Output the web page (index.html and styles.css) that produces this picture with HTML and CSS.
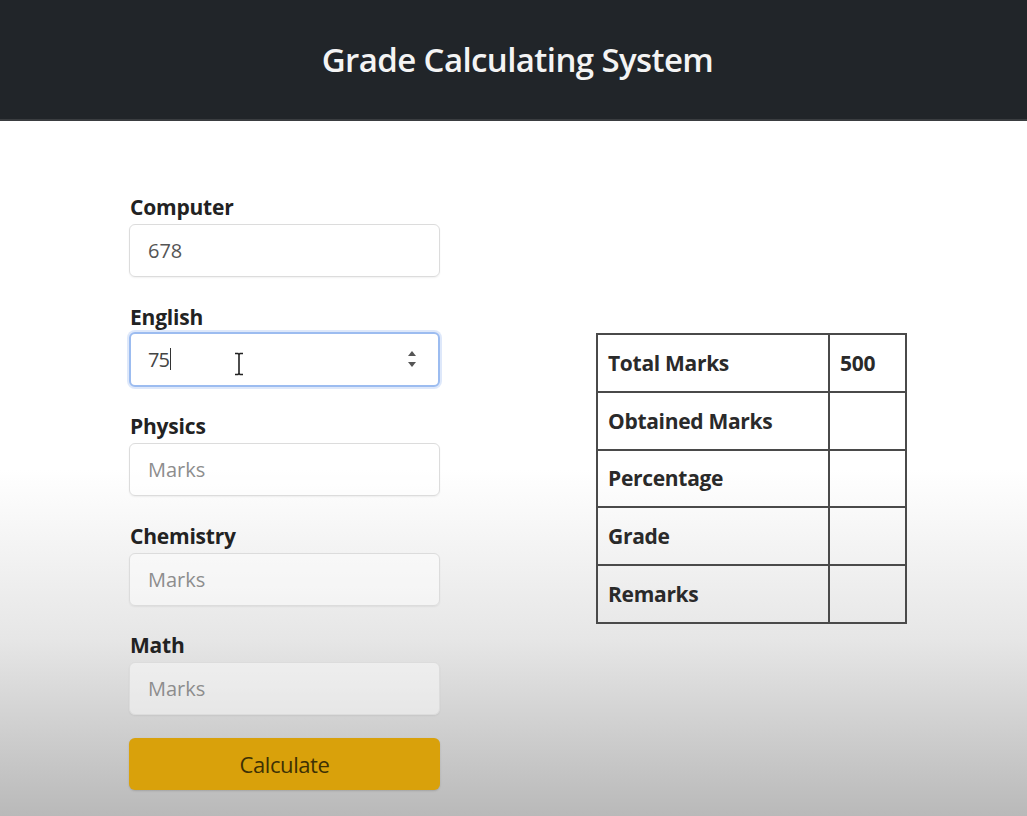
FILE: index.html
```html
<!DOCTYPE html>
<html lang="en">
<head>
<meta charset="utf-8">
<title>Grade Calculating System</title>
<link rel="stylesheet" href="styles.css">
</head>
<body>
<header class="topbar">
  <h1 class="title">Grade Calculating System</h1>
</header>
<main class="page">
  <form class="form-col">
    <div class="group">
      <label class="label">Computer</label>
      <input class="field" type="text" value="678">
    </div>
    <div class="group">
      <label class="label">English</label>
      <div class="field field-focus">
        <span class="typed">75</span><span class="caret"></span>
        <svg class="ibeam" width="12" height="24" viewBox="0 0 12 24"><path d="M2 1.5h3l1 1 1-1h3M6 2.5v19M2 22.5h3l1-1 1 1h3" fill="none" stroke="#222" stroke-width="1.6"/></svg>
        <svg class="spin" width="12" height="22" viewBox="0 0 12 22"><path d="M6 3 10 8H2z" fill="#555"/><path d="M6 19 10 14H2z" fill="#555"/></svg>
      </div>
    </div>
    <div class="group">
      <label class="label">Physics</label>
      <input class="field" type="text" placeholder="Marks">
    </div>
    <div class="group">
      <label class="label">Chemistry</label>
      <input class="field" type="text" placeholder="Marks">
    </div>
    <div class="group">
      <label class="label">Math</label>
      <input class="field" type="text" placeholder="Marks">
    </div>
    <button class="btn" type="button">Calculate</button>
  </form>
  <table class="result">
    <tr><th>Total Marks</th><td>500</td></tr>
    <tr><th>Obtained Marks</th><td></td></tr>
    <tr><th>Percentage</th><td></td></tr>
    <tr><th>Grade</th><td></td></tr>
    <tr><th>Remarks</th><td></td></tr>
  </table>
</main>
</body>
</html>
```
FILE: styles.css
```css
* { box-sizing: border-box; }
html, body { margin: 0; padding: 0; }
body {
  font-family: "Open Sans", "Noto Sans", sans-serif;
  color: #212529;
  height: 816px;
  overflow: hidden;
  background: linear-gradient(to bottom, #ffffff 0px, #ffffff 470px, #e6e6e6 640px, #b9b9b9 816px);
}
.topbar {
  height: 121px;
  background: #212529;
  display: flex;
  align-items: center;
  justify-content: center;
  border-bottom: 2px solid #3a3d40;
}
.title {
  margin: 0;
  color: #f4f4f4;
  font-size: 33px;
  font-weight: 600;
  letter-spacing: -0.6px;
  padding-left: 8px;
}
.page {
  display: flex;
  align-items: flex-start;
  padding: 72px 0 0 129px;
  gap: 156px;
}
.form-col {
  width: 311px;
  display: flex;
  flex-direction: column;
}
.group {
  display: flex;
  flex-direction: column;
  margin-bottom: 25.5px;
}
.label {
  font-size: 21px;
  font-weight: 700;
  line-height: 28px;
  margin-bottom: 3px;
  padding-left: 1px;
  color: #222;
  letter-spacing: -0.2px;
}
.field {
  height: 53px;
  width: 100%;
  border: 1px solid #dcdcdc;
  border-radius: 6px;
  background: rgba(255,255,255,0.45);
  font-family: inherit;
  font-size: 20px;
  color: #555;
  padding: 0 18px;
  outline: none;
  box-shadow: 0 1px 2px rgba(0,0,0,0.06);
}
.field::placeholder { color: #8d8d8d; }
.field-focus {
  display: flex;
  align-items: center;
  height: 55px;
  margin-top: -2px;
  border: 2px solid #9cbcf0;
  box-shadow: 0 0 0 2px rgba(160,190,240,0.35);
  background: #fff;
  padding: 0 0 0 17px;
  position: relative;
}
.typed { color: #444; letter-spacing: -1px; }
.caret {
  width: 1px;
  height: 22px;
  background: #333;
  margin-left: 1px;
}
.ibeam {
  position: absolute;
  left: 102px;
  top: 18px;
}
.spin { margin-left: auto; margin-right: 20px; }
.btn {
  height: 52px;
  margin-top: -3px;
  border: none;
  border-radius: 6px;
  background: #d9a10b;
  color: #3d3004;
  font-family: inherit;
  font-size: 22px;
  letter-spacing: -0.4px;
  box-shadow: 0 1px 2px rgba(0,0,0,0.15);
}
.result {
  margin-top: 140px;
  border-collapse: collapse;
  border: 2px solid #4a4a4a;
  width: 311px;
}
.result th, .result td {
  border: 2px solid #4a4a4a;
  height: 57.8px;
  font-size: 21px;
  font-weight: 700;
  text-align: left;
  padding: 0 10px;
  color: #2a2a2a;
  letter-spacing: -0.3px;
}
.result th { width: 232px; }
```
